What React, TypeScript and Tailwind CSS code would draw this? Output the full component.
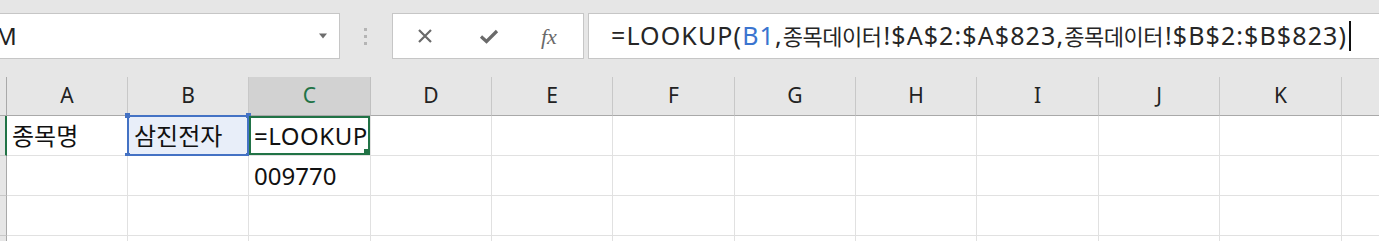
import React from "react";

const cols = ["A", "B", "C", "D", "E", "F", "G", "H", "I", "J", "K", ""];
const font = { fontFamily: '"Noto Sans", "Noto Sans CJK KR", sans-serif' };

function Cell({ col, row }: { col: number; row: number }) {
  const base = "relative border-r border-b border-[#e1e1e1] flex items-center";
  if (row === 1 && col === 0) {
    return <div className={base + " bg-white"}><span className="pl-[5px] text-[24px] text-[#111]">종목명</span></div>;
  }
  if (row === 1 && col === 1) {
    return (
      <div className={base + " bg-[#e8eef9]"}>
        <div className="absolute inset-[-1px] border-2 border-[#4472c4] pointer-events-none"></div>
        <div className="absolute left-[-3px] top-[-3px] w-[5px] h-[5px] bg-[#4472c4]"></div>
        <div className="absolute right-[-3px] top-[-3px] w-[5px] h-[5px] bg-[#4472c4]"></div>
        <div className="absolute left-[-3px] bottom-[-3px] w-[5px] h-[5px] bg-[#4472c4]"></div>
        <div className="absolute right-[-3px] bottom-[-3px] w-[5px] h-[5px] bg-[#4472c4]"></div>
        <span className="pl-[6px] text-[24px] text-[#111]">삼진전자</span>
      </div>
    );
  }
  if (row === 1 && col === 2) {
    return (
      <div className={base + " bg-white overflow-hidden"}>
        <span className="pl-[5px] text-[24px] tracking-[0.5px] text-[#111] whitespace-nowrap">=LOOKUP</span>
        <div className="absolute inset-0 border-2 border-[#217346] pointer-events-none"></div>
        <div className="absolute right-0 bottom-0 w-[6px] h-[6px] bg-[#217346]"></div>
      </div>
    );
  }
  if (row === 2 && col === 2) {
    return <div className={base + " bg-white"}><span className="pl-[5px] text-[24px] text-[#111]">009770</span></div>;
  }
  return <div className={base + " bg-white"}></div>;
}

function Ko({ children }: { children: React.ReactNode }) {
  return <span className="text-[22px] tracking-[-0.5px] mr-[2px]">{children}</span>;
}

export default function App() {
  return (
    <div className="w-[1379px] h-[241px] overflow-hidden bg-[#e6e6e6]" style={font}>
      <div className="h-[77px] flex items-start pt-[13px]">
        <div className="w-[340px] shrink-0 h-[46px] bg-white border border-l-0 border-[#c6c6c6] flex items-center justify-between overflow-hidden">
          <span className="ml-[-5px] text-[24px] text-[#222]">M</span>
          <svg width="10" height="6" viewBox="0 0 10 6" className="mr-[11px] mb-[1px]">
            <path d="M1 0.5 L9 0.5 L5 5.5 Z" fill="#6d6d6d" />
          </svg>
        </div>
        <div className="w-[52px] shrink-0 h-[46px] flex flex-col items-center justify-center gap-[4px] pr-[1px]">
          <div className="w-[3px] h-[3px] bg-[#b5b5b5]"></div>
          <div className="w-[3px] h-[3px] bg-[#b5b5b5]"></div>
          <div className="w-[3px] h-[3px] bg-[#b5b5b5]"></div>
        </div>
        <div className="w-[192px] shrink-0 h-[46px] bg-white border border-[#c6c6c6] flex items-center">
          <svg width="16" height="16" viewBox="0 0 16 16" className="ml-[24px]">
            <path d="M2 2 L14 14 M14 2 L2 14" stroke="#6a6a6a" strokeWidth="2.2" />
          </svg>
          <svg width="20" height="16" viewBox="0 0 20 16" className="ml-[46px]">
            <path d="M2 8.5 L7.5 13.5 L18 3" stroke="#6a6a6a" strokeWidth="3.2" fill="none" />
          </svg>
          <span className="ml-[42px] text-[22px] italic text-[#6a6a6a]" style={{ fontFamily: '"Liberation Serif", serif' }}>fx</span>
        </div>
        <div className="flex-1 min-w-0 ml-[4px] h-[46px] bg-white border border-r-0 border-[#c6c6c6] flex items-center whitespace-nowrap overflow-hidden">
          <span className="pl-[22px] text-[25px] tracking-[1.1px] text-[#262626]">
            =LOOKUP(<span className="text-[#3a74cf]">B1</span>,<Ko>종목데이터</Ko>!$A$2:$A$823,<Ko>종목데이터</Ko>!$B$2:$B$823)
          </span>
          <span className="inline-block w-[2px] h-[30px] bg-[#111] ml-[2px]"></span>
        </div>
      </div>
      <div className="grid grid-cols-[7px_121px_121px_122px_121px_121px_122px_121px_121px_122px_121px_122px_121px] grid-rows-[39px_40px_40px_40px_40px]">
        <div className="bg-[#e6e6e6] border-r border-b border-[#a9a9a9]"></div>
        {cols.map((c, i) => (
          <div
            key={i}
            className={
              "flex items-center justify-center text-[21px] border-b border-[#a9a9a9] border-r " +
              (i === 2 ? "bg-[#d2d2d2] text-[#217346] border-r-[#c0c0c0]" : "bg-[#e6e6e6] text-[#222] border-r-[#c8c8c8]")
            }
          >
            {c}
          </div>
        ))}
        {[1, 2, 3, 4].map((r) => (
          <React.Fragment key={r}>
            <div className={"bg-[#e6e6e6] border-b border-[#c8c8c8] border-r " + (r === 1 ? "border-r-2 border-r-[#217346]" : "border-r-[#a9a9a9]")}></div>
            {cols.map((c, i) => (
              <Cell key={i} col={i} row={r} />
            ))}
          </React.Fragment>
        ))}
      </div>
    </div>
  );
}
